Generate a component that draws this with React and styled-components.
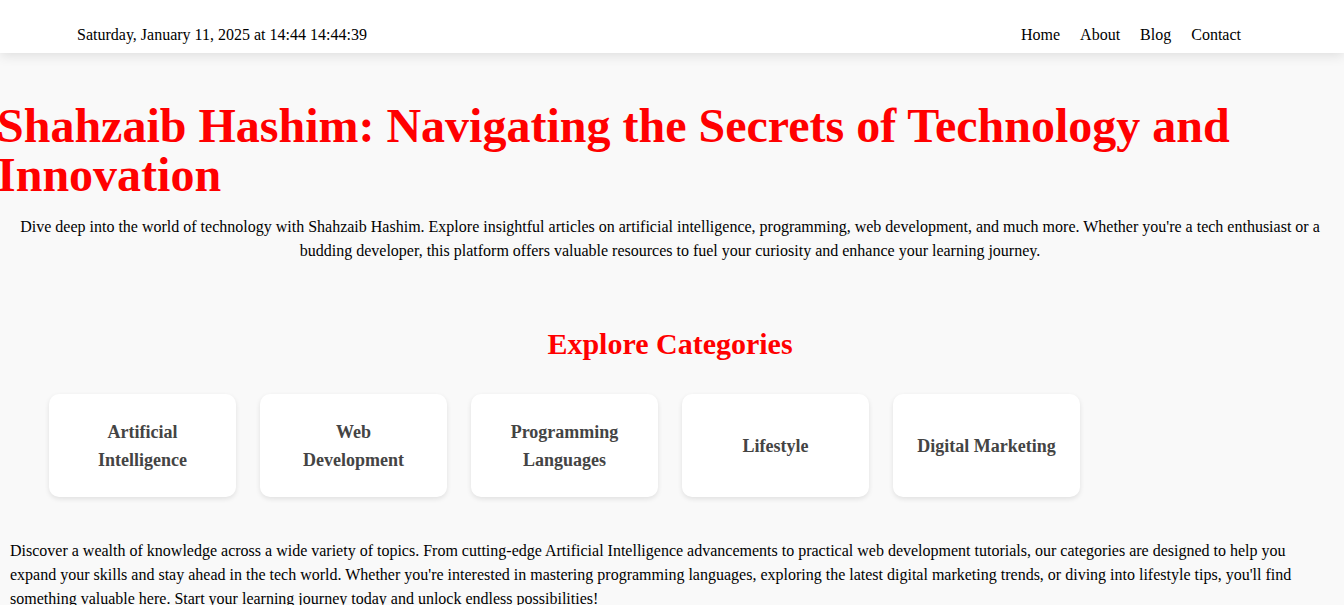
import React from 'react';
import styled, { createGlobalStyle } from 'styled-components'

const GlobalStyle = createGlobalStyle`
    body{
        margin:0;
        background:#f9f9f9;
        font-family:"Liberation Serif", "Times New Roman", serif;
        color:#000;
    }
`

const categories = [
    'Artificial Intelligence',
    'Web Development',
    'Programming Languages',
    'Lifestyle',
    'Digital Marketing',
]

const App = () => {
    return (
        <>
            <GlobalStyle />
            <Header>
                <DateText>Saturday, January 11, 2025 at 14:44 14:44:39</DateText>
                <Nav>
                    <NavLink href="#">Home</NavLink>
                    <NavLink href="#">About</NavLink>
                    <NavLink href="#">Blog</NavLink>
                    <NavLink href="#">Contact</NavLink>
                </Nav>
            </Header>
            <Main>
                <Hero>
                    <Title>Shahzaib Hashim: Navigating the Secrets of Technology and Innovation</Title>
                    <Intro>
                        Dive deep into the world of technology with Shahzaib Hashim. Explore insightful articles on artificial intelligence, programming, web development, and much more. Whether you're a tech enthusiast or a budding developer, this platform offers valuable resources to fuel your curiosity and enhance your learning journey.
                    </Intro>
                </Hero>
                <Categories>
                    <SectionTitle>Explore Categories</SectionTitle>
                    <CardGrid>
                        {categories.map((c) => (
                            <Card key={c}>{c}</Card>
                        ))}
                    </CardGrid>
                    <Outro>
                        Discover a wealth of knowledge across a wide variety of topics. From cutting-edge Artificial Intelligence advancements to practical web development tutorials, our categories are designed to help you expand your skills and stay ahead in the tech world. Whether you're interested in mastering programming languages, exploring the latest digital marketing trends, or diving into lifestyle tips, you'll find something valuable here. Start your learning journey today and unlock endless possibilities!
                    </Outro>
                </Categories>
            </Main>
        </>
    );
}

export default App;

const Header = styled.header`
    height:53px;
    box-sizing:border-box;
    display:flex;
    align-items:center;
    justify-content:space-between;
    padding:16px 103px 0 77px;
    background:#fff;
    box-shadow:0 2px 12px rgba(0,0,0,0.12);
    position:relative;
    z-index:1;
`

const DateText = styled.div`
    font-size:16px;
`

const Nav = styled.nav`
    display:flex;
    gap:20px;
`

const NavLink = styled.a`
    font-size:16px;
    color:#000;
    text-decoration:none;
`

const Main = styled.main`
    margin-right:4px;
`

const Hero = styled.section`
    padding-top:48px;
    text-align:center;
`

const Title = styled.h1`
    margin:0 0 0 -3px;
    font-size:48px;
    line-height:49px;
    color:#ff0000;
    text-align:left;
`

const Intro = styled.p`
    margin:16px 0 0;
    padding:0 18px;
    font-size:16px;
    line-height:24px;
`

const Categories = styled.section`
    padding-top:64px;
`

const SectionTitle = styled.h2`
    margin:0;
    font-size:30px;
    color:#ff0000;
    text-align:center;
`

const CardGrid = styled.div`
    display:grid;
    grid-template-columns:repeat(auto-fill, minmax(180px, 1fr));
    gap:24px;
    padding:0 49px;
    margin-top:33px;
`

const Card = styled.div`
    height:103px;
    box-sizing:border-box;
    padding:0 24px;
    display:flex;
    align-items:center;
    justify-content:center;
    text-align:center;
    background:#fff;
    border-radius:10px;
    box-shadow:0 2px 5px rgba(0,0,0,0.1);
    font-size:18px;
    font-weight:bold;
    line-height:28px;
    color:#444;
`

const Outro = styled.p`
    margin:42px 0 0;
    padding:0 10px;
    font-size:16px;
    line-height:24px;
    max-width:1290px;
`
